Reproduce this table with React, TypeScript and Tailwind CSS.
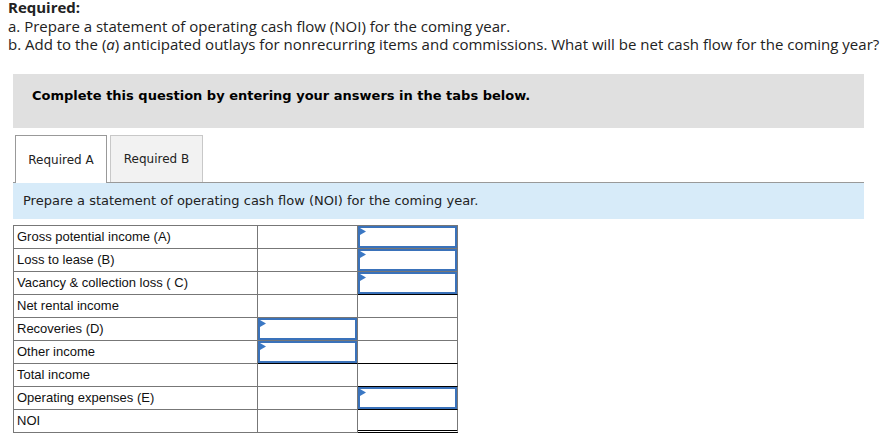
import React from "react";

const Tri = () => (
  <svg className="absolute left-0 top-0" width="6" height="7" viewBox="0 0 6 7">
    <polygon points="0,0 6,3.5 0,7" fill="#3b78c4" />
  </svg>
);

const Input = () => (
  <div className="relative h-full w-full border-2 border-[#3a72ba]">
    <Tri />
  </div>
);

type Cell = { input?: boolean; bottom?: "black" | "double" };
type Row = { label: string; c2: Cell; c3: Cell };

const rows: Row[] = [
  { label: "Gross potential income (A)", c2: {}, c3: { input: true } },
  { label: "Loss to lease (B)", c2: {}, c3: { input: true } },
  { label: "Vacancy & collection loss ( C)", c2: {}, c3: { input: true, bottom: "black" } },
  { label: "Net rental income", c2: {}, c3: {} },
  { label: "Recoveries (D)", c2: { input: true }, c3: {} },
  { label: "Other income", c2: { input: true, bottom: "black" }, c3: { bottom: "black" } },
  { label: "Total income", c2: {}, c3: { bottom: "black" } },
  { label: "Operating expenses (E)", c2: {}, c3: { input: true, bottom: "black" } },
  { label: "NOI", c2: {}, c3: { bottom: "double" } },
];

function DataCell({ cell }: { cell: Cell }) {
  const b =
    cell.bottom === "double"
      ? "border-b-[3px] border-b-black border-double"
      : cell.bottom === "black"
      ? "border-b border-b-black"
      : "border-b border-b-[#777]";
  return (
    <div className={`w-[100px] h-[23px] border-r border-r-[#777] ${b}`}>
      {cell.input ? <Input /> : null}
    </div>
  );
}

export default function App() {
  return (
    <div className="w-[889px] h-[439px] bg-white overflow-hidden">
      <div
        className="px-[8px] text-[15px] leading-[18.5px] text-[#222] -mt-[2px]"
        style={{ fontFamily: '"Open Sans", "Liberation Sans", sans-serif' }}
      >
        <div className="font-bold">Required:</div>
        <div>a. Prepare a statement of operating cash flow (NOI) for the coming year.</div>
        <div>
          b. Add to the (<i>a</i>) anticipated outlays for nonrecurring items and commissions. What will be net cash flow for the coming year?
        </div>
      </div>

      <div className="ml-[13px] w-[851px] mt-[20px]">
        <div
          className="h-[54px] bg-[#e0e0e0] pt-[14px] pl-[19px] text-[13px] leading-[16px] font-bold text-black"
          style={{ fontFamily: '"DejaVu Sans", Verdana, sans-serif' }}
        >
          Complete this question by entering your answers in the tabs below.
        </div>

        <div
          className="mt-[7px] flex gap-[3px] pl-[2px] text-[12px] text-[#222]"
          style={{ fontFamily: '"DejaVu Sans", Verdana, sans-serif' }}
        >
          <div className="relative z-10 -mb-px w-[92px] h-[48px] pt-px bg-white border border-b-0 border-[#999] flex items-center justify-center">
            Required A
          </div>
          <div className="w-[93px] h-[47px] pt-px bg-[#f2f2f2] border border-b-0 border-[#c8c8c8] flex items-center justify-center">
            Required B
          </div>
        </div>

        <div
          className="h-[37px] border-t border-[#999] bg-[#d7ebf9] flex items-center pl-[10px] pt-px text-[13px] text-[#222]"
          style={{ fontFamily: '"DejaVu Sans", Verdana, sans-serif' }}
        >
          Prepare a statement of operating cash flow (NOI) for the coming year.
        </div>

        <div
          className="mt-[6px] w-[445px] border-t border-l border-[#777] text-[13px] text-[#111]"
          style={{ fontFamily: '"Liberation Sans", Arial, sans-serif' }}
        >
          {rows.map((r) => (
            <div key={r.label} className="flex">
              <div className="w-[244px] h-[23px] border-r border-b border-[#777] pl-[3px] pt-px flex items-center">
                {r.label}
              </div>
              <DataCell cell={r.c2} />
              <DataCell cell={r.c3} />
            </div>
          ))}
        </div>
      </div>
    </div>
  );
}
